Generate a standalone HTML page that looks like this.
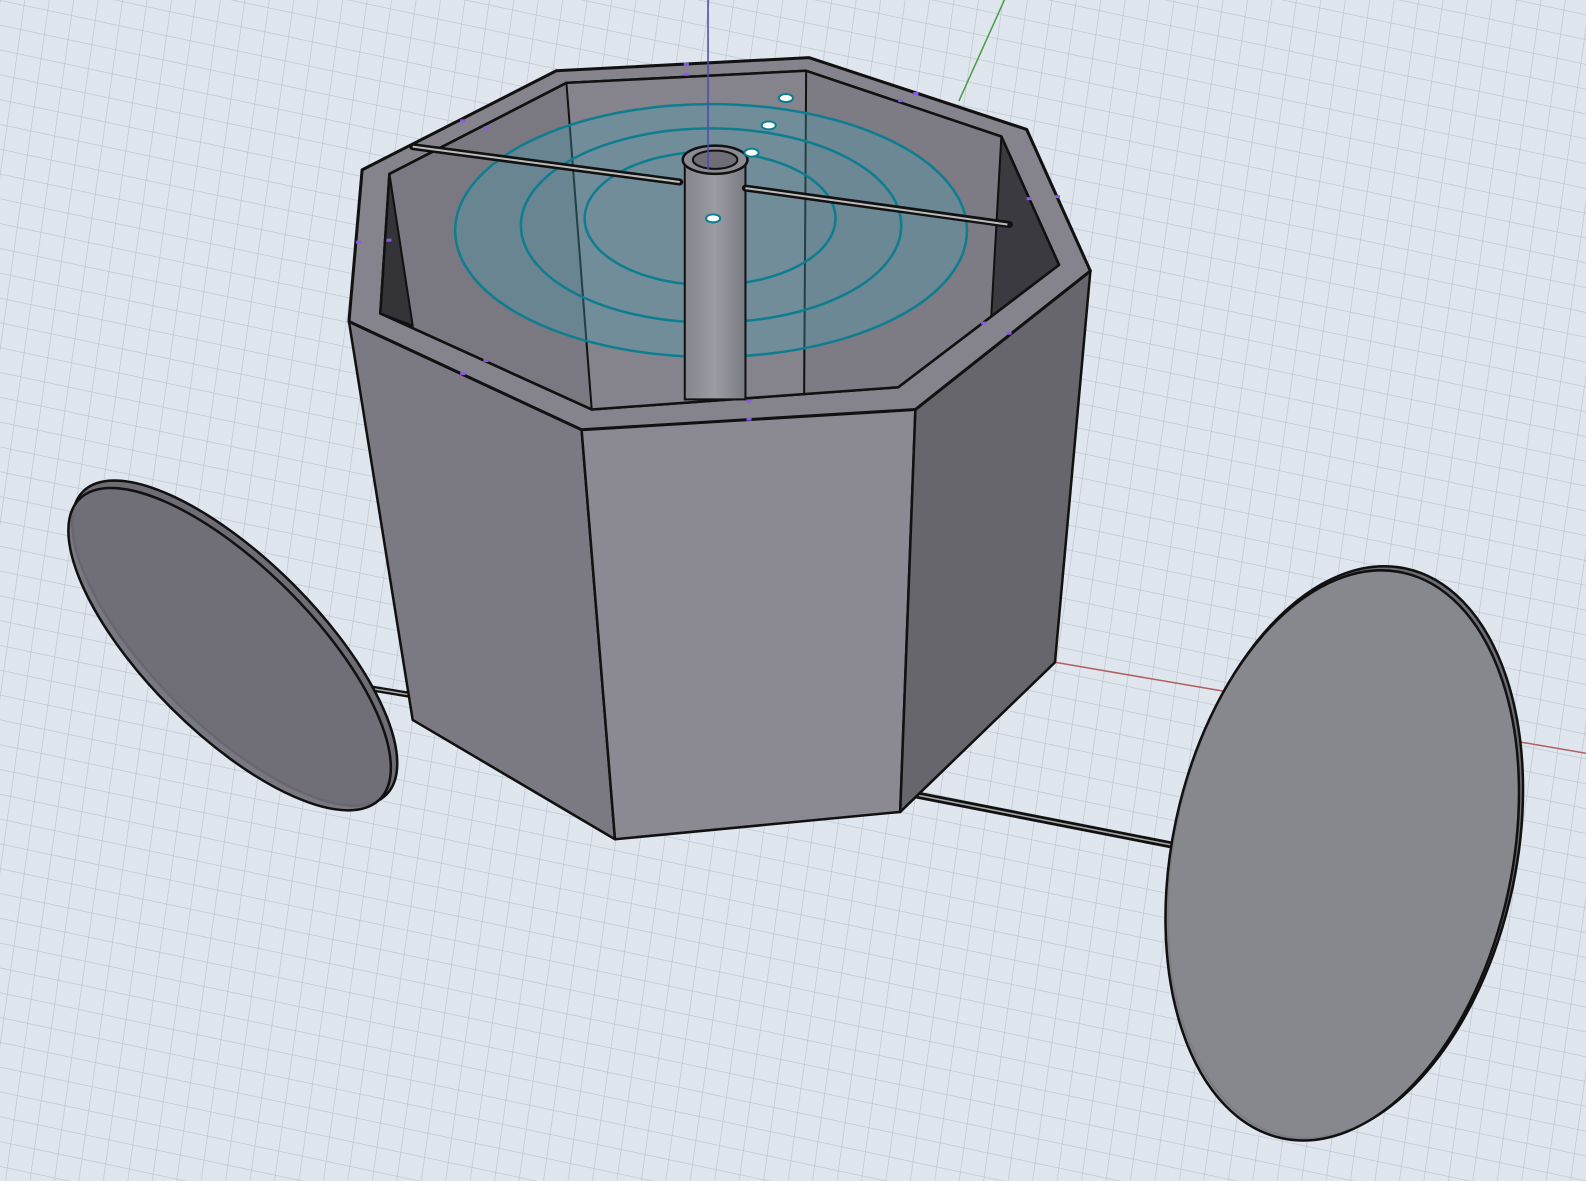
<!DOCTYPE html>
<html><head><meta charset="utf-8"><style>html,body{margin:0;padding:0;background:#dfe6ee;overflow:hidden}svg{display:block}</style></head>
<body>
<svg width="1586" height="1181" viewBox="0 0 1568 1168" preserveAspectRatio="none" xmlns="http://www.w3.org/2000/svg">
<defs>
<pattern id="g" width="24" height="24" patternUnits="userSpaceOnUse" patternTransform="rotate(12) skewX(4)">
<path d="M0 0H24M0 0V24" stroke="#bac1cb" stroke-width="1.2" fill="none"/>
</pattern>
<linearGradient id="pole" x1="0" x2="1"><stop offset="0" stop-color="#85858d"/><stop offset=".5" stop-color="#9c9ca4"/><stop offset="1" stop-color="#7a7a82"/></linearGradient>
</defs>
<rect width="1568" height="1168" fill="#dfe6ee"/>
<rect width="1568" height="1168" fill="url(#g)"/>
<line x1="993" y1="0" x2="948" y2="100" stroke="#4a9a4a" stroke-width="1.5"/>
<line x1="1043" y1="655" x2="1568" y2="745" stroke="#b06060" stroke-width="1.5"/>
<line x1="368" y1="681" x2="410" y2="688" stroke="#111" stroke-width="6"/>
<line x1="368" y1="681" x2="410" y2="688" stroke="#aaa" stroke-width="1.5"/>
<line x1="905" y1="786" x2="1160" y2="836" stroke="#111" stroke-width="7"/>
<line x1="905" y1="786" x2="1160" y2="836" stroke="#aaa" stroke-width="1.5"/>
<line x1="1160" y1="836" x2="1185" y2="843" stroke="#111" stroke-width="2"/>
<ellipse cx="232" cy="636" rx="212" ry="82" transform="rotate(45 232 636)" fill="#6e6d75" stroke="#111" stroke-width="2.5"/>
<ellipse cx="227" cy="642" rx="210" ry="82" transform="rotate(45 227 642)" fill="#706f77" fill-opacity="0.92" stroke="#111" stroke-width="2.5"/>
<polygon points="345,318 575,425 608,830 408,712" fill="#7b7a82" stroke="#111" stroke-width="2.5" stroke-linejoin="round"/>
<polygon points="575,425 905,405 890,803 608,830" fill="#8b8a93" stroke="#111" stroke-width="2.5" stroke-linejoin="round"/>
<polygon points="905,405 1078,268 1043,655 890,803" fill="#67666d" stroke="#111" stroke-width="2.5" stroke-linejoin="round"/>
<polygon points="358,168 550,70 800,57 1015,128 1078,268 905,405 575,425 345,318" fill="#85848c" stroke="#111" stroke-width="3" stroke-linejoin="round"/>
<polygon points="385,172 560,82 797,70 990,135 1047,262 888,383 585,405 376,310" fill="#7a7880" stroke="#111" stroke-width="2.5" stroke-linejoin="round"/>
<polygon points="560,82 797,70 795,390 585,405" fill="#85848c"/>
<polygon points="797,70 990,135 980,313 888,383 795,390" fill="#7d7c84"/>
<polygon points="385,172 376,310 408,322" fill="#333338" stroke="#111" stroke-width="2"/>
<polygon points="990,135 1047,262 980,313" fill="#3a3a40" stroke="#111" stroke-width="2"/>
<line x1="560" y1="82" x2="585" y2="405" stroke="#111" stroke-width="2"/>
<line x1="797" y1="70" x2="795" y2="390" stroke="#111" stroke-width="2"/>
<polygon points="385,172 560,82 797,70 990,135 1047,262 888,383 585,405 376,310" fill="none" stroke="#111" stroke-width="2.5" stroke-linejoin="round"/>
<ellipse cx="703" cy="228" rx="254" ry="126" fill="#4aa2b6" fill-opacity="0.33"/>
<ellipse cx="703" cy="228" rx="253" ry="125" fill="none" stroke="#0e7d90" stroke-width="2.5"/>
<ellipse cx="703" cy="223" rx="188" ry="96" fill="none" stroke="#0e7d90" stroke-width="2.5"/>
<ellipse cx="702" cy="216" rx="124" ry="66" fill="none" stroke="#0e7d90" stroke-width="2.5"/>
<line x1="408" y1="145" x2="672" y2="180" stroke="#111" stroke-width="7" stroke-linecap="round"/>
<line x1="408" y1="145" x2="672" y2="180" stroke="#bbb" stroke-width="2"/>
<rect x="677" y="158" width="60" height="237" fill="url(#pole)" stroke="#111" stroke-width="2"/>
<ellipse cx="707" cy="158" rx="32" ry="14" fill="#8c8b93" stroke="#111" stroke-width="2.5"/>
<ellipse cx="707" cy="158" rx="22" ry="9" fill="#6f6e76" stroke="#111" stroke-width="2"/>
<line x1="700" y1="0" x2="700" y2="168" stroke="#4a4ab0" stroke-width="1.5"/>
<line x1="737" y1="186" x2="998" y2="222" stroke="#111" stroke-width="7" stroke-linecap="round"/>
<line x1="737" y1="186" x2="996" y2="222" stroke="#bbb" stroke-width="2"/>
<g fill="#fff" stroke="#0e7d90" stroke-width="2">
<ellipse cx="777" cy="97" rx="7" ry="4"/>
<ellipse cx="760" cy="124" rx="7" ry="4"/>
<ellipse cx="743" cy="151" rx="7" ry="4"/>
<ellipse cx="705" cy="216" rx="7" ry="4"/>
</g>
<g fill="#8a5ae0">
<rect x="676" y="62" width="5" height="3"/><rect x="676" y="72" width="5" height="3"/>
<rect x="888" y="98" width="5" height="3"/><rect x="903" y="91" width="5" height="3"/>
<rect x="1015" y="195" width="5" height="3"/><rect x="1043" y="193" width="5" height="3"/>
<rect x="970" y="318" width="5" height="3"/><rect x="995" y="328" width="5" height="3"/>
<rect x="738" y="395" width="5" height="3"/><rect x="738" y="413" width="5" height="3"/>
<rect x="478" y="355" width="5" height="3"/><rect x="455" y="368" width="5" height="3"/>
<rect x="352" y="238" width="5" height="3"/><rect x="382" y="236" width="5" height="3"/>
<rect x="455" y="118" width="5" height="3"/><rect x="478" y="125" width="5" height="3"/>
</g>
<ellipse cx="1330" cy="843" rx="169" ry="287" transform="rotate(12 1330 843)" fill="#6e6d75" stroke="#111" stroke-width="2.5"/>
<ellipse cx="1327" cy="846" rx="168" ry="286" transform="rotate(12 1327 846)" fill="#8a8991" fill-opacity="0.9" stroke="#111" stroke-width="2.5"/>
</svg>
</body></html>
